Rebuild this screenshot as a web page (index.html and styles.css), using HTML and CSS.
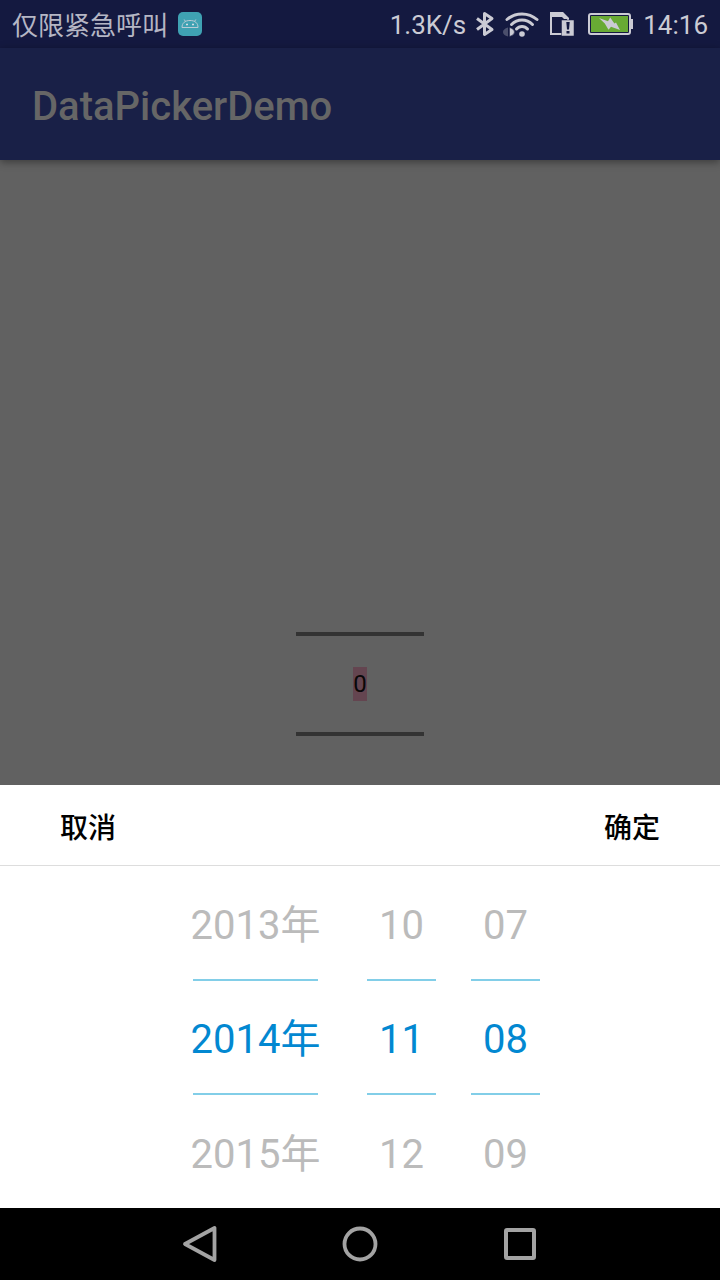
FILE: index.html
```html
<!DOCTYPE html>
<html lang="zh-CN">
<head>
<meta charset="utf-8">
<meta name="viewport" content="width=device-width, initial-scale=1">
<title>DataPickerDemo</title>
<link rel="stylesheet" href="styles.css">
</head>
<body>
<div class="screen">
  <div class="status">
    <span class="carrier">仅限紧急呼叫</span>
    <svg class="app-icon" width="24" height="24" viewBox="0 0 24 24" aria-hidden="true">
      <rect width="24" height="24" rx="5" fill="#3fa2b3"/>
      <path d="M4 15.500C4 11 7 8.500 12 8.500s8 2.500 8 7zM7.500 9.500L6.200 7.500M16.500 9.500l1.300-2" fill="none" stroke="#b9ccd6" stroke-width="1"/>
      <path d="M8 12.500h2M14 12.500h2" stroke="#d5dfe5" stroke-width="1.300"/>
    </svg>
    <span class="speed">1.3K/s</span>
    <svg class="bluetooth" width="20" height="28" viewBox="0 0 20 28" aria-hidden="true">
      <path d="M2 8.500l15 11-7.500 5V3.500L17 8.500l-15 11" fill="none" stroke="#cbcbd4" stroke-width="3" stroke-linejoin="round"/>
    </svg>
    <svg class="wifi" width="36" height="28" viewBox="0 0 36 28" aria-hidden="true">
      <g fill="none" stroke="#cbcbd4" stroke-width="3" stroke-linecap="round">
        <path d="M4 9.500C12.500 2 25.500 2 34 9.500"/>
        <path d="M8.500 14.500C14.500 8.500 23.500 8.500 29.500 14.500"/>
        <path d="M13.500 19C16.500 15.500 21.500 15.500 24.500 19"/>
      </g>
      <circle cx="19" cy="24" r="2.800" fill="#cbcbd4"/>
      <path d="M5 17.500v9q-5-1.500-5-4.500 0-3 5-4.500z" fill="#4b4f6c"/>
      <path d="M6.500 17.500q5 1.500 5 4.500 0 3-5 4.500z" fill="#cbcbd4" stroke="#141940" stroke-width=".5"/>
    </svg>
    <svg class="sim" width="24" height="24" viewBox="0 0 24 24" aria-hidden="true">
      <path d="M1 1h11l6 6v15H1z" fill="none" stroke="#cbcbd4" stroke-width="2"/>
      <path d="M0 0h13l6 6v1h-5l-2-2H0z" fill="#cbcbd4"/>
      <path d="M11.500 8H24v16H11.500z" fill="#cbcbd4" stroke="#141940" stroke-width=".5"/>
      <path d="M16.300 10h3.400l-.7 7.500h-2zM16.500 19h3v2.500h-3z" fill="#141940"/>
    </svg>
    <svg class="battery" width="45" height="22" viewBox="0 0 45 22" aria-hidden="true">
      <rect x="1" y="1" width="41" height="20" rx="2" fill="none" stroke="#cbcbd4" stroke-width="2"/>
      <path d="M43 6h2v10h-2z" fill="#cbcbd4"/>
      <rect x="3" y="3" width="37" height="16" fill="#68aa34"/>
      <path d="M11 5l9 3.200 2.200-3.700 4.200 6 1.600-1 4 7.500-9-3.300-2.500 3-3.700-6.200z" fill="#cbcbd4"/>
    </svg>
    <time class="clock">14:16</time>
  </div>
  <header class="app-bar"><h1 class="title">DataPickerDemo</h1></header>
  <main class="content">
    <div class="counter"><span class="count">0</span></div>
    <section class="sheet" role="dialog" aria-label="日期">
      <div class="actions">
        <button class="action" type="button">取消</button>
        <button class="action" type="button">确定</button>
      </div>
      <div class="wheels">
        <ul class="wheel year">
          <li class="option">2013年</li>
          <li class="option selected">2014年</li>
          <li class="option">2015年</li>
        </ul>
        <ul class="wheel">
          <li class="option">10</li>
          <li class="option selected">11</li>
          <li class="option">12</li>
        </ul>
        <ul class="wheel">
          <li class="option">07</li>
          <li class="option selected">08</li>
          <li class="option">09</li>
        </ul>
      </div>
    </section>
  </main>
  <nav class="nav">
    <button class="key" type="button" aria-label="返回">
      <svg width="40" height="40" viewBox="0 0 40 40"><path d="M34.500 4v32L5 20z" fill="none" stroke="#a3a3a3" stroke-width="3.800" stroke-linejoin="round"/></svg>
    </button>
    <button class="key" type="button" aria-label="主页">
      <svg width="40" height="40" viewBox="0 0 40 40"><circle cx="20" cy="20" r="15.500" fill="none" stroke="#a3a3a3" stroke-width="3.800"/></svg>
    </button>
    <button class="key" type="button" aria-label="最近任务">
      <svg width="40" height="40" viewBox="0 0 40 40"><rect x="6" y="6" width="28" height="28" rx="1" fill="none" stroke="#a3a3a3" stroke-width="4"/></svg>
    </button>
  </nav>
</div>
</body>
</html>
```
FILE: styles.css
```css
* {
  box-sizing: border-box;
}

body {
  margin: 0;
  font-family: Roboto, "Noto Sans CJK SC", sans-serif;
  background: #616161;
}

.screen {
  display: flex;
  flex-direction: column;
  min-height: 100vh;
}

.status {
  display: flex;
  align-items: center;
  height: 48px;
  padding: 0 12px;
  background: #141940;
  color: #cbcbd4;
  font-size: 26px;
  line-height: 48px;
}

.carrier {
  padding-top: 4px;
  color: #b5b6c4;
}

.app-icon {
  margin-left: 10px;
}

.speed {
  margin-left: auto;
  padding-top: 2px;
}

.bluetooth {
  margin-left: 9px;
}

.wifi {
  margin-left: 8px;
}

.sim {
  margin-left: 11px;
}

.battery {
  margin-left: 14px;
}

.clock {
  margin-left: 10px;
  padding-top: 2px;
}

.app-bar {
  display: flex;
  align-items: center;
  height: 112px;
  padding: 6px 32px 0;
  background: #192047;
  box-shadow: 0 2px 8px rgba(0, 0, 0, 0.4);
  z-index: 1;
}

.title {
  margin: 0;
  color: #666;
  font-size: 40px;
  font-weight: 500;
  line-height: 48px;
}

.content {
  position: relative;
  flex: 1;
  display: flex;
  align-items: center;
  justify-content: center;
}

.counter {
  display: flex;
  align-items: center;
  justify-content: center;
  width: 128px;
  height: 104px;
  border-top: 4px solid #333;
  border-bottom: 4px solid #333;
}

.count {
  background: #644550;
  color: #090708;
  font-size: 24px;
  line-height: 34px;
}

.sheet {
  position: absolute;
  left: 0;
  right: 0;
  bottom: 0;
  background: #fff;
  z-index: 2;
}

.actions {
  display: flex;
  justify-content: space-between;
  padding: 0 40px;
  border-bottom: 1px solid #ddd;
}

.action {
  height: 80px;
  padding: 8px 20px 0;
  border: 0;
  background: none;
  color: #000;
  font: 500 28px/40px Roboto, "Noto Sans CJK SC", sans-serif;
}

.wheels {
  display: flex;
  justify-content: center;
  gap: 35px;
  padding-left: 13px;
}

.wheel {
  width: 69px;
  margin: 0;
  padding: 0;
  list-style: none;
}

.year {
  width: 125px;
  margin-right: 14px;
}

.option {
  display: flex;
  align-items: center;
  justify-content: center;
  height: 113px;
  padding-top: 6px;
  color: #bbb;
  font-size: 40px;
  line-height: 48px;
  white-space: nowrap;
}

.selected {
  height: 116px;
  border-top: 2px solid #82cee8;
  border-bottom: 2px solid #82cee8;
  color: #0288d1;
}

.nav {
  display: flex;
  justify-content: center;
  gap: 80px;
  height: 72px;
  background: #000;
}

.key {
  display: grid;
  place-items: center;
  width: 80px;
  padding: 0;
  border: 0;
  background: none;
}
```
